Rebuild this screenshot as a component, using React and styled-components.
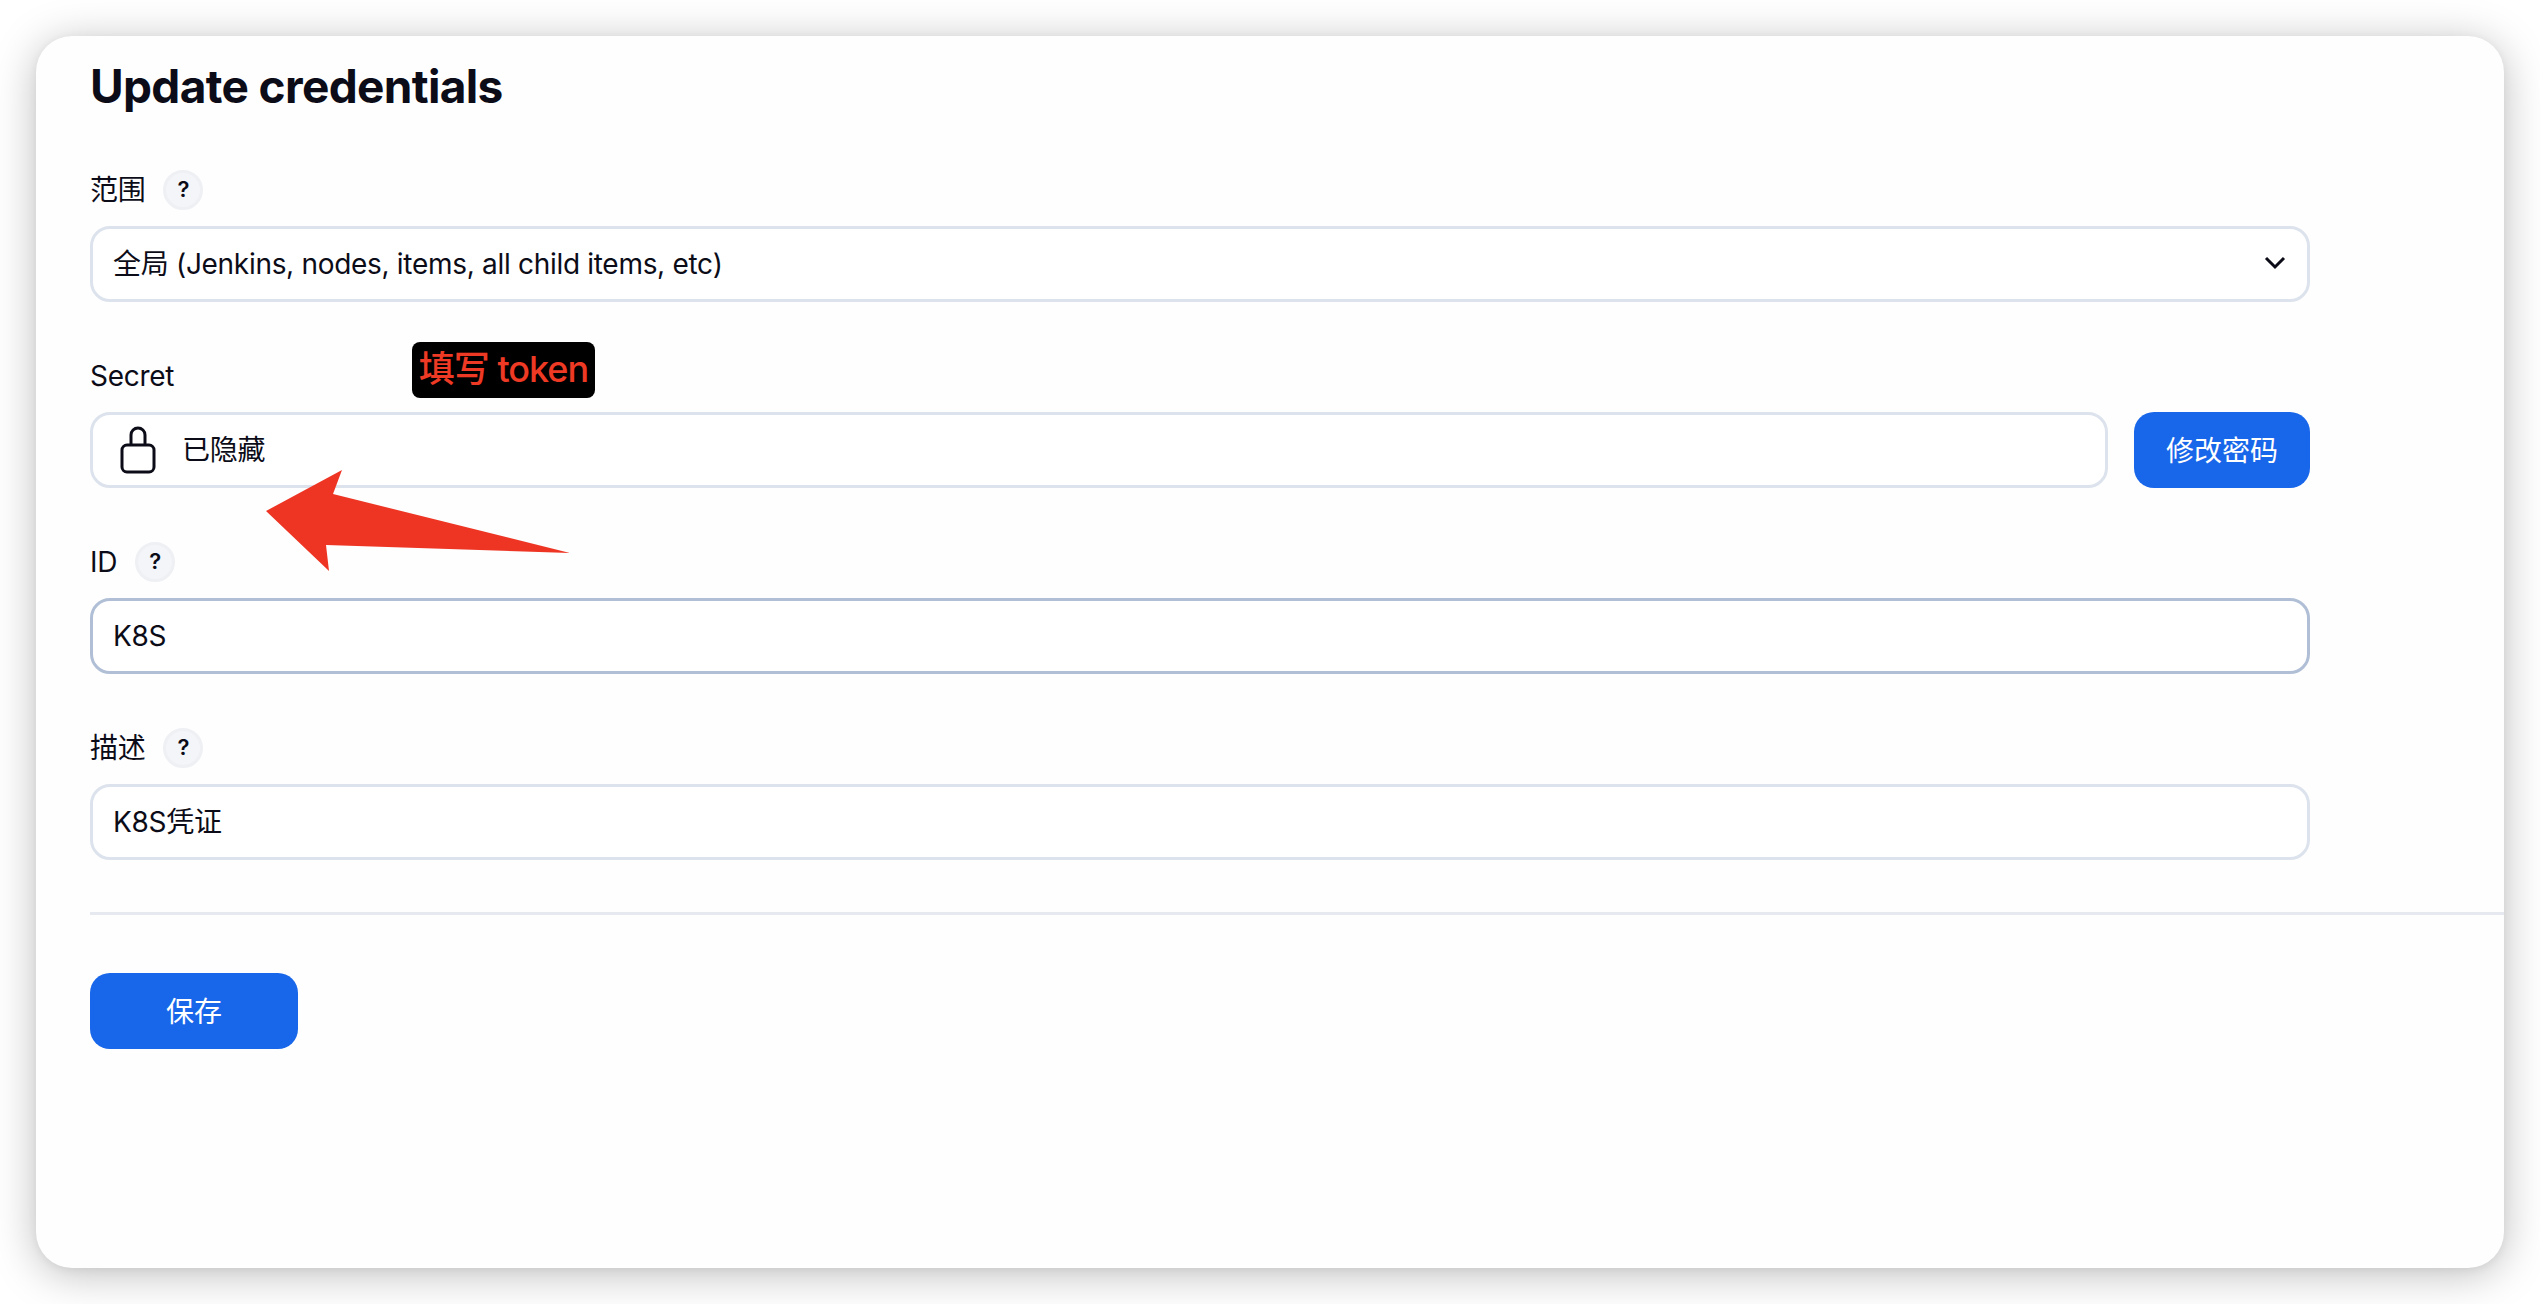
import React from 'react';
import styled, { createGlobalStyle } from 'styled-components';

const GlobalStyle = createGlobalStyle`
  html, body {
    margin: 0;
    padding: 0;
    background: #fff;
  }
  * {
    box-sizing: border-box;
  }
`;

const Page = styled.div`
  width: 2540px;
  height: 1304px;
  padding: 36px;
  font-family: Inter, "Noto Sans CJK SC", sans-serif;
  color: #0c0c18;
  overflow: hidden;
`;

const Card = styled.main`
  position: relative;
  height: 1232px;
  padding-top: 18px;
  background: #fefefe;
  border-radius: 36px;
  box-shadow: 0 2px 10px rgba(0, 0, 0, 0.05), 0 6px 44px rgba(0, 0, 0, 0.26);
`;

const Title = styled.h1`
  margin: 0 0 52px 54px;
  font-size: 46px;
  line-height: 64px;
  font-weight: 700;
  letter-spacing: -0.65px;
`;

const Form = styled.form`
  display: flex;
  flex-direction: column;
  gap: 54px;
  width: 2220px;
  margin-left: 54px;
`;

const Field = styled.div`
  display: flex;
  flex-direction: column;
  gap: 16px;
`;

const LabelRow = styled.div`
  display: flex;
  align-items: center;
  gap: 18px;
  height: 40px;
`;

const Label = styled.label`
  font-size: 28px;
  line-height: 40px;
  font-weight: 430;
  letter-spacing: -0.3px;
`;

const Help = styled.span`
  display: flex;
  align-items: center;
  justify-content: center;
  width: 40px;
  height: 40px;
  padding-bottom: 2px;
  border-radius: 50%;
  background: #f3f5f9;
  border: 3px solid #eef0f4;
  font-size: 22px;
  font-weight: 600;
`;

const Box = styled.div`
  position: relative;
  display: flex;
  align-items: center;
  width: 100%;
  height: 76px;
  padding: 0 20px;
  background: #fff;
  border: 3.5px solid ${(p) => (p.$hover ? '#b0bfd6' : '#dde3ed')};
  border-radius: 20px;
  font-size: 28px;
  font-weight: 430;
  line-height: 40px;
  letter-spacing: -0.3px;
`;

const Chevron = styled.svg`
  position: absolute;
  right: 21px;
  top: 27px;
  width: 22px;
  height: 14px;
`;

const SecretRow = styled.div`
  display: flex;
  gap: 26px;
`;

const LockIcon = styled.svg`
  width: 36px;
  height: 48px;
  margin: 0 26px 0 7px;
  flex: none;
`;

const Button = styled.button`
  flex: none;
  width: ${(p) => p.$width}px;
  height: 76px;
  padding: 0 0 2px;
  border: none;
  border-radius: 20px;
  background: #1866e9;
  color: #fff;
  font-family: inherit;
  font-size: 28px;
  font-weight: 400;
`;

const Divider = styled.hr`
  height: 3px;
  margin: 52px 0 58px 54px;
  border: none;
  background: #e6eaf0;
`;

const Actions = styled.div`
  margin-left: 54px;
`;

const Note = styled.div`
  position: absolute;
  left: 376px;
  top: 306px;
  width: 183px;
  height: 56px;
  border-radius: 8px;
  background: #000;
  color: #ee3a24;
  font-size: 36px;
  font-weight: 500;
  line-height: 54px;
  letter-spacing: -1px;
  text-align: center;
  white-space: nowrap;
`;

const Arrow = styled.svg`
  position: absolute;
  left: 230px;
  top: 434px;
  width: 304px;
  height: 101px;
`;

export default function App() {
  return (
    <Page>
      <GlobalStyle />
      <Card>
        <Title>Update credentials</Title>
        <Form>
          <Field>
            <LabelRow>
              <Label>范围</Label>
              <Help>?</Help>
            </LabelRow>
            <Box>
              全局 (Jenkins, nodes, items, all child items, etc)
              <Chevron viewBox="0 0 22 14">
                <path d="M2 2l9 9 9-9" fill="none" stroke="#0c0c18" strokeWidth="3" />
              </Chevron>
            </Box>
          </Field>
          <Field>
            <LabelRow>
              <Label>Secret</Label>
            </LabelRow>
            <SecretRow>
              <Box>
                <LockIcon viewBox="0 0 36 48">
                  <rect x="2" y="19" width="32" height="27" rx="5" fill="none" stroke="#0c0c18" strokeWidth="3" />
                  <path d="M11 19V9a7 7 0 0 1 14 0v10" fill="none" stroke="#0c0c18" strokeWidth="3" />
                </LockIcon>
                已隐藏
              </Box>
              <Button type="button" $width={176}>修改密码</Button>
            </SecretRow>
          </Field>
          <Field>
            <LabelRow>
              <Label>ID</Label>
              <Help>?</Help>
            </LabelRow>
            <Box $hover>K8S</Box>
          </Field>
          <Field>
            <LabelRow>
              <Label>描述</Label>
              <Help>?</Help>
            </LabelRow>
            <Box>K8S凭证</Box>
          </Field>
        </Form>
        <Divider />
        <Actions>
          <Button type="button" $width={208}>保存</Button>
        </Actions>
        <Note>填写 token</Note>
        <Arrow viewBox="0 0 304 101">
          <polygon points="0,41 76,0 67,24 304,83 60,75 63,101" fill="#ee3524" />
        </Arrow>
      </Card>
    </Page>
  );
}
